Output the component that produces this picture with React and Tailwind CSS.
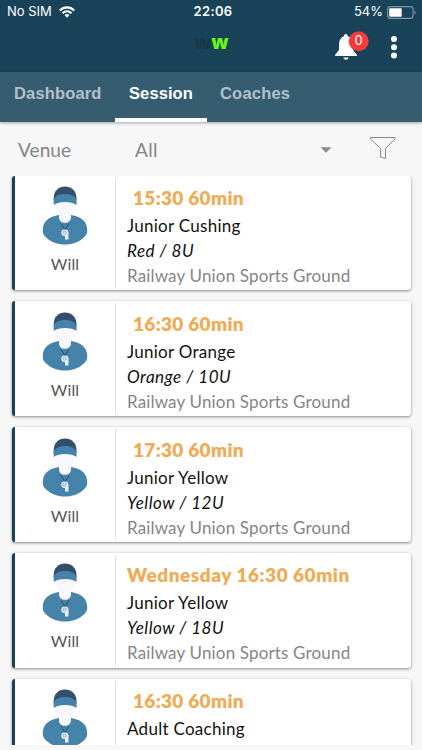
const sessions = [
  { time: '15:30 60min', name: 'Junior Cushing', group: 'Red / 8U', place: 'Railway Union Sports Ground', coach: 'Will' },
  { time: '16:30 60min', name: 'Junior Orange', group: 'Orange / 10U', place: 'Railway Union Sports Ground', coach: 'Will' },
  { time: '17:30 60min', name: 'Junior Yellow', group: 'Yellow / 12U', place: 'Railway Union Sports Ground', coach: 'Will' },
  { day: 'Wednesday', time: '16:30 60min', name: 'Junior Yellow', group: 'Yellow / 18U', place: 'Railway Union Sports Ground', coach: 'Will' },
  { time: '16:30 60min', name: 'Adult Coaching' },
];

function CoachIcon() {
  return (
    <svg viewBox="0 0 46 60" className="block h-[60px] w-[46px]">
      <path d="M.8 44C.8 36 6 31 16.500 29H29.500C40 31 45.200 36 45.200 44C45.500 48 43.500 50.500 40 53C35 57 29 58.500 23 58.500S11 57 6 53C2.500 50.500 .5 48 .8 44Z" fill="#4683aa" />
      <path d="M13 16H33C33 22 32 25.500 29 28.500V31.500C29 34.500 26.500 36.800 23 36.800S17 34.500 17 31.500V28.500C14 25.500 13 22 13 16Z" fill="#f8f8fc" />
      <path d="M11.700 12C11.700 5 16.500 .5 23 .5S34.500 5 34.500 12V14H11.700Z" fill="#344f6b" />
      <path d="M11.500 13.500C15 6.300 31 6.300 34.600 13.500L34.500 19C30 15 16 15 11.800 19Z" fill="#4683aa" />
      <path d="M19 37.500L22.800 43.500L27 37.500" fill="none" stroke="#2b4d6c" strokeWidth="1" />
      <path d="M22.500 43.500A3.200 3.200 0 1 0 22.500 49.900H23V53.500H26.500V46.500A3.400 3.400 0 0 0 22.500 43.500Z" fill="#e9f1f7" />
      <circle cx="22.600" cy="46.600" r="1.700" fill="#d5e3ee" stroke="#82abc8" strokeWidth=".8" />
    </svg>
  );
}

function SessionCard({ session }) {
  return (
    <article className="flex h-[114.800px] w-[399px] shrink-0 rounded-[3px] border-l-[3px] border-[#1b425c] bg-white shadow-[0_1px_3px_rgba(0,0,0,0.45)]">
      <div className="my-[2px] flex w-[101px] shrink-0 flex-col items-center border-r border-[#dedede] pt-[8.500px]">
        <CoachIcon />
        {session.coach && <span className="mt-[7px] text-[16px] leading-[22px] tracking-[0.100px] text-[#555]">{session.coach}</span>}
      </div>
      <div className="min-w-0 whitespace-nowrap pl-[11px] pt-[10.500px]">
        <h2 className={`text-[19px] leading-[24px] font-extrabold text-[#efac56] ${session.day ? 'tracking-[0.520px]' : 'pl-[6px] tracking-[0.300px]'}`}>
          {session.day ? `${session.day} ` : ''}{session.time}
        </h2>
        <p className="mt-[4px] text-[17px] leading-[24px] tracking-[0.280px] text-[#111]">{session.name}</p>
        <p className="text-[17px] leading-[25px] tracking-[0.500px] text-[#111] italic">{session.group}</p>
        <p className="text-[17px] leading-[25px] tracking-[0.160px] text-[#858585]">{session.place}</p>
      </div>
    </article>
  );
}

export default function App() {
  return (
    <div className="flex h-[750px] w-[422px] flex-col overflow-hidden bg-[#f7f7f7] font-['Lato','Liberation_Sans',sans-serif]">
      <header className="h-[72px] shrink-0 bg-[#194359] text-white">
        <div className="grid h-[24px] grid-cols-3 items-center pl-[7px] pr-[6px] font-['Inter',sans-serif] text-[13px]">
          <div className="flex items-center gap-[7px]">
            <span>No SIM</span>
            <svg viewBox="0 0 16 12" className="h-[12px] w-[16px]" fill="none" stroke="white" strokeWidth="2.200">
              <path d="M.8 4.500C5 .3 11 .3 15.200 4.500M3.500 7.300C6.200 4.800 9.800 4.800 12.500 7.300" />
              <path d="M5.500 9Q8 7 10.500 9L8 11.700Z" fill="white" stroke="none" />
            </svg>
          </div>
          <span className="pl-[3px] text-center font-semibold tracking-[0.350px]">22:06</span>
          <div className="flex items-center justify-end gap-[4px]">
            <span>54%</span>
            <svg viewBox="0 0 29 13" className="h-[13px] w-[29px]">
              <rect x=".6" y=".6" width="25.500" height="11.800" rx="2.800" fill="none" stroke="#8096a2" strokeWidth="1.100" />
              <rect x="2.200" y="2.200" width="12.500" height="8.600" rx="1" fill="white" />
              <path d="M27.500 4.500Q30 6.500 27.500 8.500Z" fill="#8096a2" />
            </svg>
          </div>
        </div>
        <div className="flex h-[48px] items-start">
          <div className="ml-[194px] mt-[9px] flex w-[37px] font-['Open_Sans',sans-serif] text-[19px] leading-[18px] font-extrabold">
            <span className="text-[#15394a]">w</span>
            <span className="text-[#68f616]">w</span>
          </div>
          <svg viewBox="0 0 38 34" className="ml-[102px] mt-[5px] h-[34px] w-[38px]">
            <path d="M12.800 5C14 5 14.800 5.800 14.800 7.200C19 8.500 20 12 20 16V21L24 26V27H2V26L6 21V16C6 12 7.500 8.500 11 7.200C11 5.800 11.600 5 12.800 5ZM10.300 28.500H15.500C15 31.500 10.800 31.500 10.300 28.500Z" fill="white" />
            <circle cx="25.700" cy="12.300" r="10" fill="#f23c3c" />
            <text x="25.700" y="16" textAnchor="middle" fill="white" fontFamily="Lato" fontSize="12.500">0</text>
          </svg>
          <svg viewBox="0 0 8 24" className="ml-[19px] mt-[11px] h-[24px] w-[8px]" fill="white">
            <circle cx="4" cy="4" r="3" /><circle cx="4" cy="12.200" r="3" /><circle cx="4" cy="20.400" r="3" />
          </svg>
        </div>
      </header>
      <nav className="z-10 flex h-[50px] shrink-0 bg-[#365c70] font-['Liberation_Sans',sans-serif] text-[16.500px] leading-[20px] font-bold text-[#b2c1c9] shadow-[0_1px_3px_rgba(0,0,0,0.35)]">
        <div className="w-[115px] pl-[14px] pt-[11px] tracking-[0.150px]">Dashboard</div>
        <div className="w-[92px] border-b-[4px] border-white pt-[11px] text-center tracking-[0.100px] text-white">Session</div>
        <div className="pl-[13px] pt-[11px] tracking-[0.200px]">Coaches</div>
      </nav>
      <div className="flex h-[53.500px] shrink-0 items-start pt-[14px] text-[19px] leading-[28px] text-[#858585]">
        <span className="w-[117px] pl-[18px] tracking-[0.100px]">Venue</span>
        <span className="w-[202.500px] pl-[18px] tracking-[0.300px]">All</span>
        <svg viewBox="0 0 12 6" className="mt-[11px] h-[6px] w-[12px]"><path d="M.5 .3H11.500L6 5.700Z" fill="#8b8b8b" /></svg>
        <svg viewBox="0 0 27 24" className="ml-[37.500px] h-[24px] w-[27px]" fill="none" stroke="#888" strokeWidth="1">
          <path d="M1.500 1.500H26V3L16.500 12.500V22.500L11.500 21V12.500L1.500 3Z" />
        </svg>
      </div>
      <main className="flex h-[569.500px] shrink-0 flex-col gap-[11px] overflow-hidden pl-[12px]">
        {sessions.map((session, index) => <SessionCard key={index} session={session} />)}
      </main>
    </div>
  );
}
